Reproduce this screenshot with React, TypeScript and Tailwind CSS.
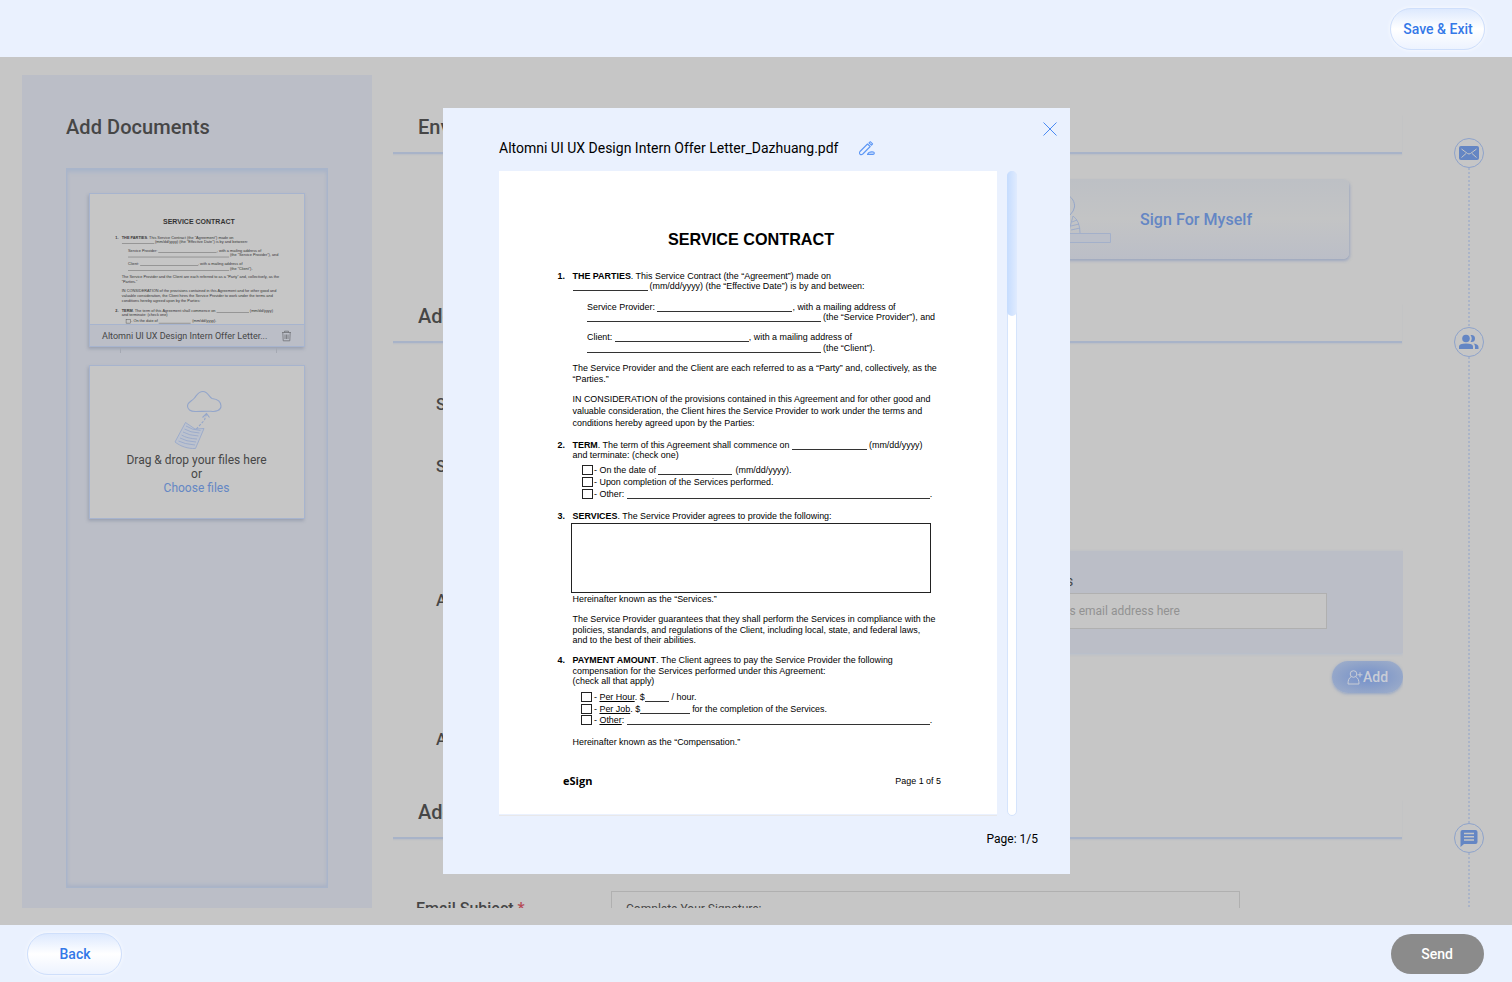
import type { ReactNode } from "react";

function Row({ className = "", n, children }: { className?: string; n?: string; children: ReactNode }) {
  return (
    <div className={`flex h-[10px] items-center whitespace-pre leading-[10px] ${className}`}>
      {n && <b className="-ml-[15px] w-[15px] shrink-0">{n}</b>}
      {children}
    </div>
  );
}

function Blank({ className }: { className: string }) {
  return <span className={`h-px shrink-0 self-end bg-[#333] ${className}`} />;
}

function Box() {
  return <span className="mr-[1px] h-[10px] w-[11px] shrink-0 border border-[#222]" />;
}

function ContractOpening() {
  return (
    <>
      <h1 className="mt-[59px] h-[18px] self-start pl-[95.5px] text-[16.2px] leading-[18px] font-bold text-black">SERVICE CONTRACT</h1>
      <Row n="1." className="mt-[23px]"><b>THE PARTIES</b>. This Service Contract (the “Agreement”) made on</Row>
      <Row><Blank className="mr-[2px] w-[75px]" />(mm/dd/yyyy) (the “Effective Date”) is by and between:</Row>
      <Row className="mt-[11px] pl-[14.5px]">Service Provider: <Blank className="w-[135px]" />, with a mailing address of</Row>
      <Row className="pl-[14.5px]"><Blank className="mr-[2px] w-[234px]" />(the “Service Provider”), and</Row>
      <Row className="mt-[10px] pl-[14.5px]">Client: <Blank className="w-[134px]" />, with a mailing address of</Row>
      <Row className="mt-[1px] pl-[14.5px]"><Blank className="mr-[2px] w-[234px]" />(the “Client”).</Row>
      <Row className="mt-[10px]">The Service Provider and the Client are each referred to as a “Party” and, collectively, as the</Row>
      <Row className="mt-[1px]">“Parties.”</Row>
      <Row className="mt-[10px]">IN CONSIDERATION of the provisions contained in this Agreement and for other good and</Row>
      <Row className="mt-[2px]">valuable consideration, the Client hires the Service Provider to work under the terms and</Row>
      <Row className="mt-[2px]">conditions hereby agreed upon by the Parties:</Row>
      <Row n="2." className="mt-[12px]"><b>TERM</b>. The term of this Agreement shall commence on <Blank className="mr-[2px] w-[75px]" />(mm/dd/yyyy)</Row>
      <Row>and terminate: (check one)</Row>
      <Row className="mt-[5px] pl-[9.5px]"><Box />- On the date of <Blank className="mr-[3px] w-[74px]" />(mm/dd/yyyy).</Row>
    </>
  );
}

function ContractPage() {
  return (
    <div className="flex h-[643px] w-[498px] flex-col bg-white pl-[73.5px] font-['Liberation_Sans',Arial,sans-serif] text-[8.93px] text-black">
      <ContractOpening />
      <Row className="mt-[2px] pl-[9.5px]"><Box />- Upon completion of the Services performed.</Row>
      <Row className="mt-[2px] pl-[9.5px]"><Box />- Other: <Blank className="w-[303px]" />.</Row>
      <Row n="3." className="mt-[12px]"><b>SERVICES</b>. The Service Provider agrees to provide the following:</Row>
      <div className="mt-[2px] -ml-[1.5px] h-[70px] w-[360px] border border-[#222]" />
      <Row className="mt-[1px]">Hereinafter known as the “Services.”</Row>
      <Row className="mt-[10px]">The Service Provider guarantees that they shall perform the Services in compliance with the</Row>
      <Row className="mt-[1px]">policies, standards, and regulations of the Client, including local, state, and federal laws,</Row>
      <Row>and to the best of their abilities.</Row>
      <Row n="4." className="mt-[10px]"><b>PAYMENT AMOUNT</b>. The Client agrees to pay the Service Provider the following</Row>
      <Row className="mt-[1px]">compensation for the Services performed under this Agreement:</Row>
      <Row>(check all that apply)</Row>
      <Row className="mt-[6px] pl-[8.5px]"><Box /><span className="ml-px">- <u>Per Hour</u>. $</span><Blank className="mr-[3px] w-[24px]" />/ hour.</Row>
      <Row className="mt-[2px] pl-[8.5px]"><Box /><span className="ml-px">- <u>Per Job</u>. $</span><Blank className="mr-[2px] w-[50px]" />for the completion of the Services.</Row>
      <Row className="mt-[1px] pl-[8.5px]"><Box /><span className="ml-px">- <u>Other</u>: </span><Blank className="w-[303px]" />.</Row>
      <Row className="mt-[12px]">Hereinafter known as the “Compensation.”</Row>
      <div className="mt-[28px] -ml-[9.5px] flex h-[12px] w-[378px] items-center justify-between leading-[12px]">
        <b className="font-['Open_Sans',sans-serif] text-[11px]">eSign</b>
        <span>Page 1 of 5</span>
      </div>
    </div>
  );
}

function PillButton({ children }: { children: ReactNode }) {
  return (
    <button className="h-[42px] w-[95px] rounded-full border border-[#cfdffb] bg-linear-to-b from-[#dde9fe] via-white via-50% to-[#edf3ff] pl-px text-[14px] font-medium text-[#3478e8] shadow-[0_0_4px_rgba(255,255,255,0.8)]">
      {children}
    </button>
  );
}

function SectionHeading({ children, className = "" }: { children: ReactNode; className?: string }) {
  return (
    <div className={`mr-px h-[39px] shrink-0 border-b-2 border-[#a8b3c8] pl-[25px] text-[20px] leading-[24px] font-medium shadow-[0_1px_1px_rgba(164,177,200,0.3)] ${className}`}>
      {children}
    </div>
  );
}

function Dots({ className }: { className: string }) {
  return <div className={`w-[2px] shrink-0 bg-[repeating-linear-gradient(to_bottom,#aab4c8_0_2px,transparent_2px_4px)] ${className}`} />;
}

function StepIcon({ children }: { children: ReactNode }) {
  return (
    <div className="flex size-[30px] shrink-0 items-center justify-center rounded-full border border-[#8ea3cb]">
      <svg width="22" height="22" viewBox="0 0 22 22" fill="#6486c4">{children}</svg>
    </div>
  );
}

function DocumentsPanel() {
  return (
    <section className="h-[833px] w-[350px] shrink-0 bg-[#bbbec7] px-[44px] pt-[40px]">
      <h2 className="text-[20px] leading-[24px] font-medium tracking-[0.003em]">Add Documents</h2>
      <div className="mt-[29px] flex h-[720px] w-[262px] flex-col border border-t-2 border-[#a9b5ca] pt-[23px] pl-[22px] shadow-[inset_0_3px_4px_-1px_#a9b4c9,inset_0_-4px_4px_-2px_#a9b2c6,inset_2px_0_2px_-1px_#b3bac9,inset_-2px_0_2px_-1px_#b3bac9]">
        <div className="relative h-[154px] w-[216px] shrink-0">
          <div className="flex h-full flex-col overflow-hidden border border-[#a7b4ce] bg-[#c6c6c6] shadow-[-1px_2px_3px_rgba(110,120,145,0.4)]">
            <div className="h-[131px] overflow-hidden">
              <div className="-mt-[2.5px] -ml-[0.5px] flex w-[498px] origin-top-left scale-[0.432] flex-col pl-[73.5px] font-['Liberation_Sans',Arial,sans-serif] text-[8.93px] text-black opacity-75">
                <ContractOpening />
              </div>
            </div>
            <div className="flex h-[22px] shrink-0 items-center justify-between border-t border-[#a7b4ce] bg-[#bbbec7] px-[12px]">
              <span className="text-[9.02px] leading-[14px] whitespace-nowrap">Altomni UI UX Design Intern Offer Letter...</span>
              <svg width="11" height="12" viewBox="0 0 11 12" fill="none" stroke="#707176" strokeWidth="0.8">
                <path d="M1 2.500H10M3.500 2.500V1.200H7.500V2.500M1.800 2.500L2.200 10.800H8.800L9.200 2.500M4 4.500V9M5.500 4.500V9M7 4.500V9" />
              </svg>
            </div>
          </div>
          <div className="absolute top-[155px] left-[31px] h-[5px] w-[157px] border-x border-[#a5a9b3]" />
        </div>
        <div className="mt-[18px] flex h-[154px] w-[216px] shrink-0 flex-col items-center border border-[#a7b4ce] bg-[#c6c6c6] text-center text-[12px] leading-[14px] shadow-[-1px_2px_3px_rgba(110,120,145,0.4)]">
          <svg className="mt-[23px] mr-[3px] h-[62px] w-[60px]" viewBox="0 0 60 62" fill="none" stroke="#94a6ca" strokeWidth="1.1">
            <path d="M30 22.500C24 22.800 21.500 20 21.500 17C21.500 13 26 12 28 9.500C31 6 32 2.500 37 2.500C42 2.500 43 8 46 9.500C50 10 55 12 55 17C55 21.500 50 23 45 22.300C40 22 35 22.500 30 22.500Z" />
            <path d="M36.500 28.500L40.500 24.500L43.500 28.500" />
            <path d="M40.500 25L38.500 31L29.500 41" strokeDasharray="2.500 1.500" />
            <path d="M19.500 33.500L29 40L38 39.500L29.500 59.500C22 60 14 57 9 53L19.500 33.500Z" fill="#bcc2ce" strokeWidth="0.800" />
            <path d="M20 37Q26 41 34.500 41.500M18.500 40Q24 43.500 33.500 44M17 43Q23 46.500 32.500 47M15.500 46Q21 49.500 31 50M14 49Q20 52.500 30 53M12.500 52Q18 55 29 56" strokeWidth="0.800" />
          </svg>
          <div className="mt-[2px] mr-px">
            <p>Drag &amp; drop your files here</p>
            <p>or</p>
            <p className="text-[#6486c4]">Choose files</p>
          </div>
        </div>
      </div>
    </section>
  );
}

function Label({ children, className }: { children: ReactNode; className: string }) {
  return <div className={`h-[20px] shrink-0 pl-[43px] text-[16px] leading-[20px] font-medium ${className}`}>{children}</div>;
}

function EnvelopeForm() {
  return (
    <section className="ml-[21px] flex h-[833px] w-[1010px] shrink-0 flex-col overflow-hidden pt-[40px]">
      <SectionHeading>Env</SectionHeading>
      <div className="mt-[25px] mr-[54px] flex h-[80px] w-[330px] shrink-0 items-center self-end rounded-[6px] bg-linear-to-b from-[#bdc0c5] via-[#c3c4c5] to-[#bbbec7] shadow-[1px_2px_3px_rgba(120,140,185,0.5)]">
        <svg className="ml-[20px]" width="72" height="60" viewBox="0 0 72 60" fill="none" stroke="#94a6ca" strokeWidth="1">
          <path d="M28 6C33 8 36 13 35.500 18Q35 22 31 26" />
          <path d="M30 42L34 27Q41 32 41 44M33 33L38 31M32 37L40 35M32 41L41 39" strokeWidth="0.800" />
          <path d="M10 44.500H71.500V53.500H10Z" fill="#bbbfc9" stroke="#a3b0ca" />
        </svg>
        <span className="mt-[2px] ml-[29px] text-[16px] font-medium tracking-[0.003em] text-[#6486c4]">Sign For Myself</span>
      </div>
      <SectionHeading className="mt-[45px]">Add</SectionHeading>
      <Label className="mt-[52px]">S</Label>
      <Label className="mt-[42px]">S</Label>
      <div className="mt-[74px] flex h-[102px] w-[400px] shrink-0 flex-col self-end bg-[#bbbec7] pt-[22px] pl-[60px] shadow-[0_1px_3px_rgba(164,180,210,0.6)]">
        <span className="pl-[3px] text-[14px] leading-[16px]">s</span>
        <div className="mt-[4px] flex h-[36px] w-[264px] items-center border border-[#b0b0b0] bg-[#c6c6c6] pl-[5.5px] text-[12px] leading-[14px] text-[#929292]">s email address here</div>
      </div>
      <Label className="-mt-[62px]">A</Label>
      <button className="mt-[50px] flex h-[32px] w-[71px] shrink-0 items-center justify-center self-end rounded-full bg-[radial-gradient(ellipse_at_center,#7390cc_0%,#8ba0c9_50%,#a3b1ca_100%)] text-[14px] font-medium text-[#c9cdd6] shadow-[0_1px_3px_rgba(100,134,196,0.5)]">
        <svg width="16" height="15" viewBox="0 0 16 15" fill="none" stroke="#c9cdd6" strokeWidth="1">
          <circle cx="6.500" cy="4" r="3.300" />
          <path d="M4 6.800C2 8 1 10 1 14H12C12 10 11 8 9 6.800M10.500 4.800H15.500M13 2.300V7.300" />
        </svg>
        Add
      </button>
      <Label className="mt-[37px]">A</Label>
      <SectionHeading className="mt-[50px]">Add</SectionHeading>
      <div className="mt-[52px] flex h-[40px] shrink-0 pl-[23px]">
        <div className="mt-[8px] w-[195px] text-[16px] leading-[20px] font-medium">Email Subject <span className="text-[#b54a55]">*</span></div>
        <div className="h-[36px] w-[629px] border border-[#b0b0b0] pl-[14px] text-[12px] leading-[34px]">Complete Your Signature:</div>
      </div>
    </section>
  );
}

function StepRail() {
  return (
    <nav className="ml-[51px] flex h-[833px] w-[30px] shrink-0 flex-col items-center pt-[63px]">
      <StepIcon>
        <path d="M3 4H19Q21 4 21 6V16Q21 18 19 18H3Q1 18 1 16V6Q1 4 3 4Z" />
        <path d="M3.500 7L9.500 11.500L11 12L12.500 11.500L18.500 7M3.500 15.500L8 11.500M18.500 15.500L14 11.500" stroke="#c6c6c6" fill="none" />
      </StepIcon>
      <Dots className="h-[159px]" />
      <StepIcon>
        <circle cx="8" cy="7.500" r="3.800" />
        <path d="M1 18V15.500Q1 12.500 8 12.500Q15 12.500 15 15.500V18ZM12.500 4Q17 3.500 17 7.500Q17 11.500 12.500 11Q15 7.500 12.500 4ZM15.500 12.500Q20.500 13 20.500 16V18H17V15.500Q17 13.500 15.500 12.500Z" />
      </StepIcon>
      <Dots className="h-[466px]" />
      <StepIcon>
        <path fillRule="evenodd" d="M4.500 3H17.500Q19.500 3 19.500 5V15Q19.500 17 17.500 17H6L2.500 20V5Q2.500 3 4.500 3ZM6 5.800V7.300H16V5.800ZM6 9V10.500H16V9ZM6 12.200V13.700H16V12.200Z" />
      </StepIcon>
      <Dots className="h-[54px]" />
    </nav>
  );
}

function PreviewDialog() {
  return (
    <div className="absolute top-[108px] left-[443px] flex h-[766px] w-[627px] flex-col bg-[#eaf1fe] text-black">
      <div className="flex h-[28px] shrink-0 justify-end pt-[14px] pr-[13px]">
        <svg width="14" height="14" viewBox="0 0 14 14" stroke="#4a8af4" strokeWidth="1">
          <path d="M0.500 0.500L13.500 13.500M13.500 0.500L0.500 13.500" />
        </svg>
      </div>
      <div className="flex h-[35px] shrink-0 items-start pl-[56px]">
        <span className="mt-[4px] text-[14px] leading-[16px]">Altomni UI UX Design Intern Offer Letter_Dazhuang.pdf</span>
        <svg className="mt-[5px] ml-[20px]" width="16" height="15" viewBox="0 0 16 15" fill="none" stroke="#5d97f5" strokeWidth="1.100" strokeLinejoin="round">
          <path d="M8.500 3L1 10.500Q0 12 1 13.200Q2.300 14.200 3.800 13L11.200 5.500ZM10 1.800L11.300 0.700L13.600 2.800L12.500 4.200Z" />
          <path d="M8.500 13.500Q9.500 10.700 13 10.700Q15.400 10.700 15.300 12.300Q15.200 13.500 14 13.500Z" fill="#b5d0fb" />
        </svg>
      </div>
      <div className="flex pl-[56px]">
        <div className="border-b border-[#e8e8ea]"><ContractPage /></div>
        <div className="ml-[10px] h-[645px] w-[10px] rounded-full border border-[#d5e4fc] bg-white">
          <div className="-mt-px -ml-px h-[145px] w-[10px] rounded-full bg-linear-to-r from-[#c5dcfe] to-[#e0ebfe]" />
        </div>
      </div>
      <div className="mt-[15px] pr-[32px] text-right text-[12px] leading-[16px]">Page: 1/5</div>
    </div>
  );
}

export default function App() {
  return (
    <div className="relative flex h-[982px] w-[1512px] flex-col overflow-hidden bg-[#eaf1fe] font-['Roboto',sans-serif] text-[#464646]">
      <header className="flex h-[57px] shrink-0 items-start justify-end pt-[8px] pr-[27px]">
        <PillButton>Save &amp; Exit</PillButton>
      </header>
      <main className="flex h-[868px] shrink-0 bg-[#c6c6c6] pt-[18px] pl-[22px]">
        <DocumentsPanel />
        <EnvelopeForm />
        <StepRail />
      </main>
      <footer className="flex h-[57px] shrink-0 items-start justify-between pt-[8px] pr-[28px] pl-[27px]">
        <PillButton>Back</PillButton>
        <button className="mt-px h-[40px] w-[93px] rounded-full bg-[#8b8b8b] pr-px text-[14px] font-medium text-white">Send</button>
      </footer>
      <PreviewDialog />
    </div>
  );
}
